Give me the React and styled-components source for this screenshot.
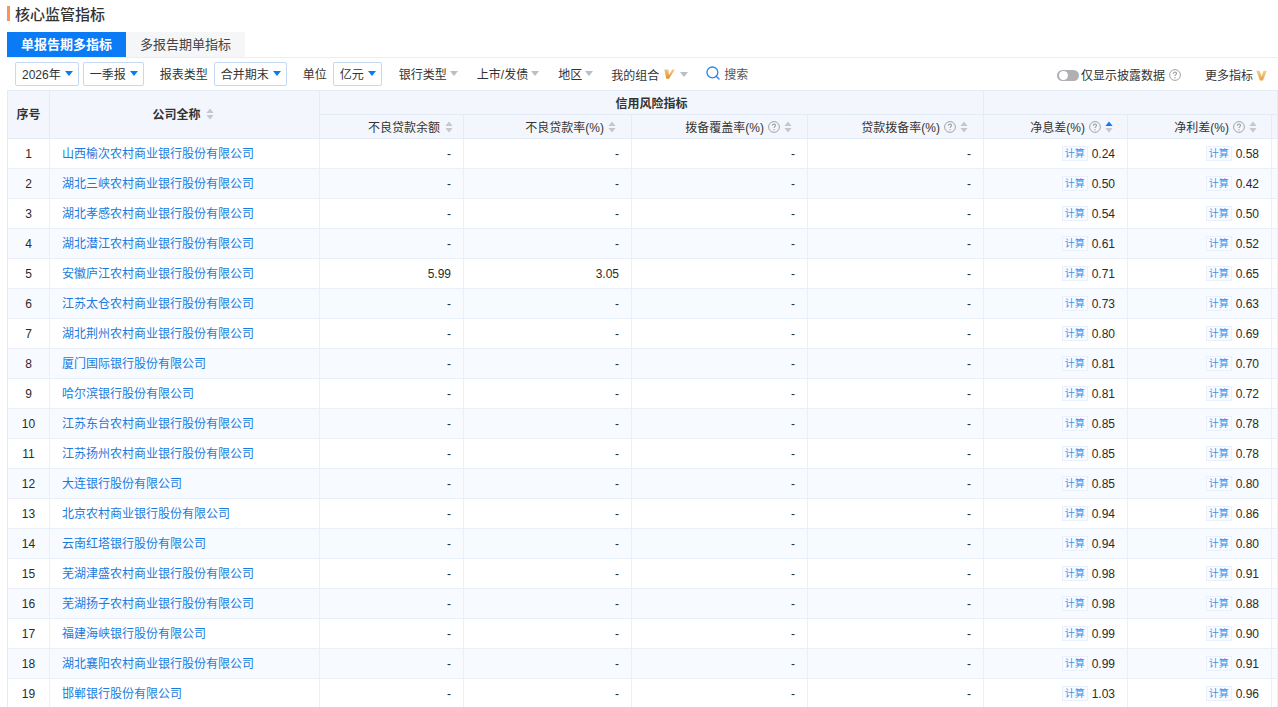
import React from 'react';
import styled, { createGlobalStyle } from 'styled-components';

const GlobalStyle = createGlobalStyle`
  html, body {
    margin: 0;
    padding: 0;
    height: 100%;
    overflow: hidden;
    background: #fff;
    font-family: "Liberation Sans", "Noto Sans CJK SC", sans-serif;
    font-size: 12px;
    color: #333;
  }
`;

const Page = styled.div`
  width: 1278px;
  height: 707px;
  overflow: hidden;
  padding-left: 7px;
  box-sizing: border-box;
`;

const Title = styled.h2`
  display: flex;
  align-items: center;
  gap: 5px;
  height: 32px;
  margin: 0;
  padding-bottom: 6px;
  box-sizing: border-box;
  font-size: 15px;
  font-weight: 500;
  color: #333;
  &::before {
    content: '';
    width: 3px;
    height: 15px;
    background: #f6975a;
  }
`;

const Tabs = styled.div`
  display: flex;
  height: 26px;
  border-bottom: 1px solid #ebeef2;
  box-sizing: border-box;
`;

const Tab = styled.div`
  width: 119px;
  display: flex;
  align-items: center;
  justify-content: center;
  padding-bottom: 2px;
  box-sizing: border-box;
  font-size: 13px;
  font-weight: ${p => (p.$active ? 700 : 400)};
  color: ${p => (p.$active ? '#fff' : '#444')};
  background: ${p => (p.$active ? '#0a7bf5' : '#f5f6f8')};
`;

const Toolbar = styled.div`
  display: flex;
  align-items: center;
  height: 32px;
  padding-left: 8px;
  padding-right: 11px;
`;

const Select = styled.div`
  display: flex;
  align-items: center;
  gap: 4px;
  height: 24px;
  padding: 0 5px 2px 6px;
  margin-right: ${p => p.$gap || 0}px;
  border: 1px solid #c5d9f3;
  border-radius: 2px;
  box-sizing: border-box;
  color: #333;
  white-space: nowrap;
`;

const Caret = styled.i`
  width: 0;
  height: 0;
  border-left: 4px solid transparent;
  border-right: 4px solid transparent;
  border-top: 5px solid ${p => (p.$grey ? '#bbbec4' : '#0a7bf5')};
  margin-top: 1px;
`;

const Label = styled.span`
  margin-left: ${p => p.$before || 0}px;
  margin-right: ${p => p.$gap || 0}px;
  padding-bottom: 2px;
  color: #333;
  white-space: nowrap;
`;

const Filter = styled.div`
  display: flex;
  align-items: center;
  gap: ${p => p.$inner || 3}px;
  margin-right: ${p => p.$gap}px;
  padding-bottom: ${p => (p.$inner ? 0 : 2)}px;
  white-space: nowrap;
  color: #333;
`;

const Search = styled.div`
  display: flex;
  align-items: center;
  gap: 4px;
  margin-top: -2px;
  color: #555;
`;

const Right = styled.div`
  margin-left: auto;
  display: flex;
  align-items: center;
  margin-top: 2px;
`;

const Toggle = styled.span`
  position: relative;
  width: 22px;
  height: 11px;
  margin-right: 2px;
  border-radius: 6px;
  background: #aeb0b3;
  &::after {
    content: '';
    position: absolute;
    left: 2px;
    top: 1px;
    width: 9px;
    height: 9px;
    border-radius: 50%;
    background: #fff;
  }
`;

const Table = styled.table`
  table-layout: fixed;
  width: 1271px;
  border-collapse: separate;
  border-spacing: 0;
  border-top: 1px solid #e3ebf6;
  border-left: 1px solid #e3ebf6;
`;

const Th = styled.th`
  height: 24px;
  padding: 0 ${p => p.$pad || 0}px ${p => (p.$span ? 2 : 0)}px 0;
  box-sizing: border-box;
  background: #f3f7fd;
  border-right: 1px solid #e3ebf6;
  border-bottom: 1px solid #e3ebf6;
  font-size: 12px;
  font-weight: ${p => (p.$pad && !p.$span ? 400 : 700)};
  color: #333;
  text-align: ${p => (p.$pad && !p.$span ? 'right' : 'center')};
  white-space: nowrap;
`;

const ThInner = styled.span`
  display: inline-flex;
  align-items: center;
  gap: ${p => p.$gap || 4}px;
  vertical-align: middle;
`;

const Td = styled.td`
  height: 30px;
  padding: 0 ${p => (p.$num ? '12px' : '0')} ${p => (p.$link ? '2px' : '0')} ${p => (p.$link ? '12px' : '0')};
  box-sizing: border-box;
  background: ${p => (p.$alt ? '#f7fafe' : '#fff')};
  border-right: 1px solid #e9f0f9;
  border-bottom: 1px solid #e9f0f9;
  font-size: 12px;
  color: #2b2b2b;
  text-align: ${p => (p.$num ? 'right' : p.$link ? 'left' : 'center')};
  white-space: nowrap;
  overflow: hidden;
`;

const CompanyLink = styled.a`
  color: #1a7ade;
  text-decoration: none;
`;

const CalcValue = styled.span`
  display: inline-flex;
  align-items: center;
  gap: 4px;
  vertical-align: middle;
`;

const Calc = styled.span`
  width: 26px;
  height: 15px;
  line-height: 13px;
  border: 1px solid #e8f1fb;
  box-sizing: border-box;
  background: #f8fbff;
  font-size: 10px;
  text-align: center;
  color: #3d94ee;
`;

const Sort = ({ up }) => (
  <svg width="8" height="12" viewBox="0 0 8 12">
    <path d="M4 0.5 L7.6 5 H0.4 Z" fill={up ? '#0a7bf5' : '#c4c7cc'} />
    <path d="M4 11.5 L7.6 7 H0.4 Z" fill="#c4c7cc" />
  </svg>
);

const Help = () => (
  <svg width="12" height="12" viewBox="0 0 12 12">
    <circle cx="6" cy="6" r="5.4" fill="none" stroke="#a0a3a8" strokeWidth="1" />
    <path d="M4.4 4.7 C4.4 3.7 5.2 3.1 6 3.1 C6.9 3.1 7.6 3.7 7.6 4.5 C7.6 5.5 6 5.6 6 7" fill="none" stroke="#a0a3a8" strokeWidth="1.1" />
    <circle cx="6" cy="8.8" r="0.7" fill="#a0a3a8" />
  </svg>
);

const VipSlant = () => (
  <svg width="11" height="10" viewBox="0 0 11 10">
    <defs>
      <linearGradient id="vipSlant" x1="0" y1="0" x2="0" y2="1">
        <stop offset="0" stopColor="#f3c677" />
        <stop offset="1" stopColor="#df8f34" />
      </linearGradient>
    </defs>
    <path d="M0.3 0.5 H4.4 L5 6 L8.4 0.5 H10.8 L5 9.7 H2.3 Z" fill="url(#vipSlant)" />
  </svg>
);

const Vip = () => (
  <svg width="11" height="11" viewBox="0 0 11 11">
    <defs>
      <linearGradient id="vipPlain" x1="0" y1="0" x2="0" y2="1">
        <stop offset="0" stopColor="#f3d096" />
        <stop offset="1" stopColor="#e5a348" />
      </linearGradient>
    </defs>
    <path d="M0.2 0.7 H3.8 L5.6 6.2 L7.4 0.7 H10.8 L7 10.4 H4 Z" fill="url(#vipPlain)" />
  </svg>
);

const SearchIcon = () => (
  <svg width="14" height="14" viewBox="0 0 14 14">
    <circle cx="6.4" cy="6.4" r="5.4" fill="none" stroke="#2d86ec" strokeWidth="1.3" />
    <path d="M10.2 10.2 L13 13" stroke="#2d86ec" strokeWidth="1.4" strokeLinecap="round" />
  </svg>
);

const rows = [
  ['山西榆次农村商业银行股份有限公司', '0.24', '0.58'],
  ['湖北三峡农村商业银行股份有限公司', '0.50', '0.42'],
  ['湖北孝感农村商业银行股份有限公司', '0.54', '0.50'],
  ['湖北潜江农村商业银行股份有限公司', '0.61', '0.52'],
  ['安徽庐江农村商业银行股份有限公司', '0.71', '0.65', '5.99', '3.05'],
  ['江苏太仓农村商业银行股份有限公司', '0.73', '0.63'],
  ['湖北荆州农村商业银行股份有限公司', '0.80', '0.69'],
  ['厦门国际银行股份有限公司', '0.81', '0.70'],
  ['哈尔滨银行股份有限公司', '0.81', '0.72'],
  ['江苏东台农村商业银行股份有限公司', '0.85', '0.78'],
  ['江苏扬州农村商业银行股份有限公司', '0.85', '0.78'],
  ['大连银行股份有限公司', '0.85', '0.80'],
  ['北京农村商业银行股份有限公司', '0.94', '0.86'],
  ['云南红塔银行股份有限公司', '0.94', '0.80'],
  ['芜湖津盛农村商业银行股份有限公司', '0.98', '0.91'],
  ['芜湖扬子农村商业银行股份有限公司', '0.98', '0.88'],
  ['福建海峡银行股份有限公司', '0.99', '0.90'],
  ['湖北襄阳农村商业银行股份有限公司', '0.99', '0.91'],
  ['邯郸银行股份有限公司', '1.03', '0.96'],
];

const columns = [42, 270, 144, 168, 176, 176, 144, 144, 6];

export default function App() {
  return (
    <Page>
      <GlobalStyle />
      <Title>核心监管指标</Title>
      <Tabs>
        <Tab $active>单报告期多指标</Tab>
        <Tab>多报告期单指标</Tab>
      </Tabs>
      <Toolbar>
        <Select $gap={4}>2026年<Caret /></Select>
        <Select $gap={16}>一季报<Caret /></Select>
        <Label $gap={6}>报表类型</Label>
        <Select $gap={16}>合并期末<Caret /></Select>
        <Label $gap={6}>单位</Label>
        <Select $gap={17}>亿元<Caret /></Select>
        <Filter $gap={19}>银行类型<Caret $grey /></Filter>
        <Filter $gap={19}>上市/发债<Caret $grey /></Filter>
        <Filter $gap={18}>地区<Caret $grey /></Filter>
        <Filter $gap={18} $inner={5}>我的组合<VipSlant /><Caret $grey /></Filter>
        <Search><SearchIcon />搜索</Search>
        <Right>
          <Toggle />
          <Label $gap={4}>仅显示披露数据</Label>
          <Help />
          <Label $before={24} $gap={3}>更多指标</Label>
          <Vip />
        </Right>
      </Toolbar>
      <Table>
        <colgroup>
          {columns.map((w, i) => <col key={i} width={w} />)}
        </colgroup>
        <thead>
          <tr>
            <Th rowSpan={2} $span>序号</Th>
            <Th rowSpan={2} $span $pad={3}><ThInner $gap={5}>公司全称<Sort /></ThInner></Th>
            <Th colSpan={4}>信用风险指标</Th>
            <Th colSpan={3} />
          </tr>
          <tr>
            <Th $pad={10}><ThInner $gap={5}>不良贷款余额<Sort /></ThInner></Th>
            <Th $pad={15}><ThInner>不良贷款率(%)<Sort /></ThInner></Th>
            <Th $pad={15}><ThInner>拨备覆盖率(%)<Help /><Sort /></ThInner></Th>
            <Th $pad={15}><ThInner>贷款拨备率(%)<Help /><Sort /></ThInner></Th>
            <Th $pad={14}><ThInner>净息差(%)<Help /><Sort up /></ThInner></Th>
            <Th $pad={14}><ThInner>净利差(%)<Help /><Sort /></ThInner></Th>
            <Th />
          </tr>
        </thead>
        <tbody>
          {rows.map(([name, nim, spread, bad, rate], i) => {
            const alt = i % 2 === 1;
            return (
              <tr key={name}>
                <Td $alt={alt}>{i + 1}</Td>
                <Td $alt={alt} $link><CompanyLink>{name}</CompanyLink></Td>
                <Td $alt={alt} $num>{bad || '-'}</Td>
                <Td $alt={alt} $num>{rate || '-'}</Td>
                <Td $alt={alt} $num>-</Td>
                <Td $alt={alt} $num>-</Td>
                <Td $alt={alt} $num><CalcValue><Calc>计算</Calc>{nim}</CalcValue></Td>
                <Td $alt={alt} $num><CalcValue><Calc>计算</Calc>{spread}</CalcValue></Td>
                <Td $alt={alt} />
              </tr>
            );
          })}
        </tbody>
      </Table>
    </Page>
  );
}
